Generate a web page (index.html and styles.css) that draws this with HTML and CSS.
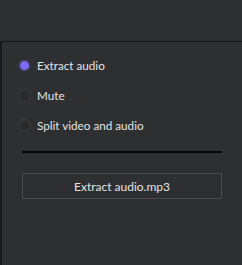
FILE: index.html
```html
<!DOCTYPE html>
<html lang="en">
<head>
  <meta charset="UTF-8" />
  <title>Audio options</title>
  <link rel="stylesheet" href="styles.css">
</head>
<body>

  <div class="topbar"></div>

  <div class="panel">
    <div class="options">
      <label class="option">
        <input type="radio" name="mode" checked>
        <span class="dot"></span>
        Extract audio
      </label>
      <label class="option">
        <input type="radio" name="mode">
        <span class="dot"></span>
        Mute
      </label>
      <label class="option">
        <input type="radio" name="mode">
        <span class="dot"></span>
        Split video and audio
      </label>
    </div>

    <div class="divider"></div>

    <button class="file-btn">Extract audio.mp3</button>
  </div>

</body>
</html>
```

FILE: styles.css
```css
body {
  margin: 0;
  font-family: Lato, 'Noto Sans', sans-serif;
  background: #2e2f31;
  color: #e4e4e6;
  height: 265px;
  display: flex;
  flex-direction: column;
  overflow: hidden;
}

.topbar {
  height: 41px;
  border-bottom: 1px solid #141517;
}

.panel {
  flex: 1;
  border-left: 2px solid #18191b;
  padding: 8px 20px 0 20px;
}

.options {
  display: flex;
  flex-direction: column;
}

.option {
  height: 30px;
  display: flex;
  align-items: center;
  font-size: 11.7px;
  cursor: pointer;
}

.option input {
  display: none;
}

.dot {
  width: 13px;
  height: 13px;
  border-radius: 50%;
  border: 1px solid #3c3d41;
  background: #2a2b2d;
  margin: 0 6px 0 -4px;
  box-sizing: border-box;
}

.option input:checked + .dot {
  background: #7c6cf5;
  border: 2.5px solid #3a3950;
}

.divider {
  height: 2px;
  background: #050506;
  margin-top: 11px;
}

.file-btn {
  display: block;
  width: 100%;
  height: 26px;
  margin-top: 20px;
  background: transparent;
  border: 1px solid #4a4b4e;
  color: #e4e4e6;
  font-family: inherit;
  font-size: 12px;
  cursor: pointer;
}
```
